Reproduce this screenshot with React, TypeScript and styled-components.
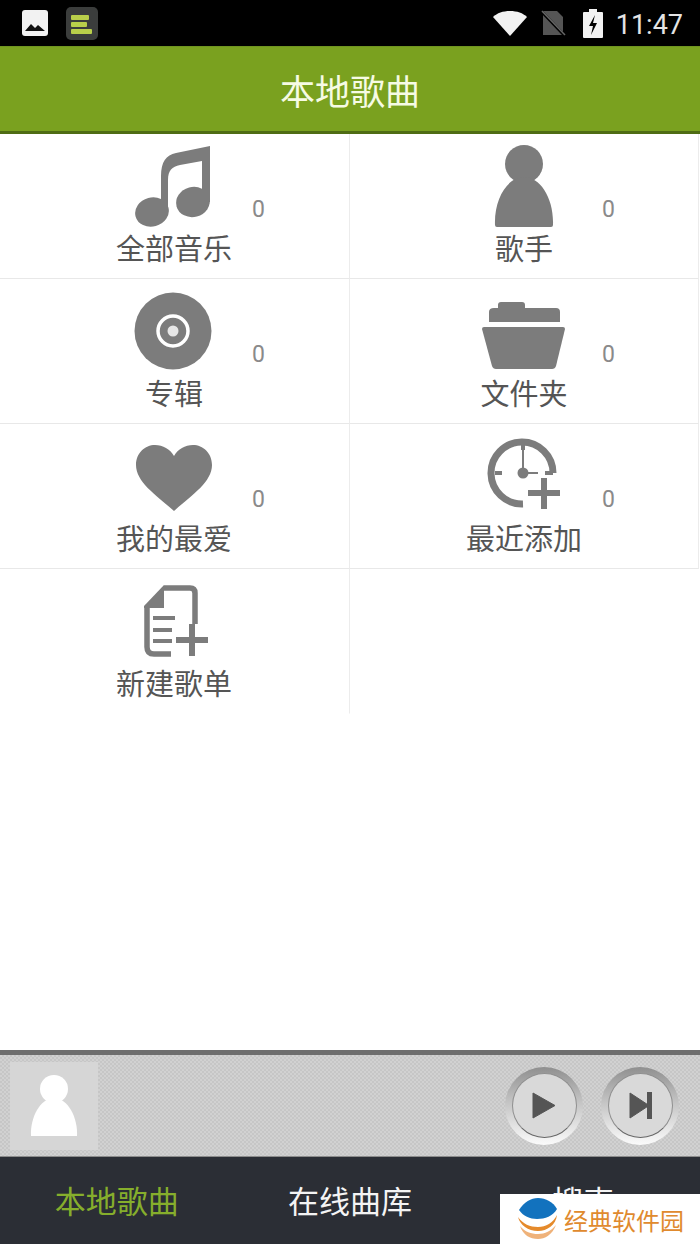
import React from 'react';
import styled, { createGlobalStyle } from 'styled-components';

const cjk = `"Noto Sans CJK SC", "Noto Sans", sans-serif`;

const GlobalStyle = createGlobalStyle`
  html, body {
    margin: 0;
    padding: 0;
    background: #fff;
  }
`;

const Screen = styled.div`
  position: relative;
  width: 700px;
  height: 1244px;
  display: flex;
  flex-direction: column;
  overflow: hidden;
  font-family: ${cjk};
`;

const StatusBar = styled.div`
  height: 46px;
  flex: none;
  background: #000;
  display: flex;
  align-items: center;
  padding: 0 17px 0 22px;
`;

const StatusLeft = styled.div`
  display: flex;
  align-items: center;
  gap: 18px;
  flex: 1;
`;

const StatusRight = styled.div`
  display: flex;
  align-items: center;
`;

const Clock = styled.span`
  font-family: Roboto, sans-serif;
  font-size: 27px;
  line-height: 30px;
  padding-top: 3px;
  color: #e4e4e4;
  margin-left: 13px;
`;

const Header = styled.div`
  height: 88px;
  flex: none;
  box-sizing: border-box;
  background: #7aa11f;
  border-top: 1px solid #6f9420;
  border-bottom: 3px solid #4f6c14;
  display: flex;
  align-items: center;
  justify-content: center;
  color: #f6fbe4;
  font-size: 35px;
  font-weight: 400;
`;

const Grid = styled.div`
  flex: 1;
  display: grid;
  grid-template-columns: 350px 350px;
  grid-auto-rows: 145px;
  align-content: start;
`;

const Cell = styled.div<{ $right?: boolean; $last?: boolean }>`
  box-sizing: border-box;
  display: grid;
  grid-template-columns: 116px 116px 1fr;
  align-items: start;
  border-right: 1px solid #ececec;
  margin-right: ${({ $right }) => ($right ? '1px' : '0')};
  border-bottom: 1px solid ${({ $last }) => ($last ? 'transparent' : '#e8e8e8')};
`;

const Tile = styled.div`
  grid-column: 2;
  display: flex;
  flex-direction: column;
  align-items: center;
  padding-top: 6px;
`;

const IconBox = styled.svg`
  display: block;
  width: 96px;
  height: 88px;
  flex: none;
  fill: #7c7c7c;
`;

const Label = styled.div`
  margin-top: 1px;
  font-size: 29px;
  line-height: 36px;
  font-weight: 400;
  color: #555;
  white-space: nowrap;
`;

const Count = styled.div`
  grid-column: 3;
  padding: 61px 0 0 20px;
  font-family: Roboto, sans-serif;
  font-size: 23px;
  line-height: 30px;
  color: #8a8a8a;
`;

const Player = styled.div`
  height: 107px;
  flex: none;
  box-sizing: border-box;
  border-top: 5px solid #6e6e6e;
  border-bottom: 1px solid #8c8c8c;
  background-color: #cbcbcb;
  background-image: repeating-conic-gradient(#c6c6c6 0 25%, #d1d1d1 0 50%);
  background-size: 4px 4px;
  display: flex;
  align-items: center;
  padding: 0 21px 0 10px;
`;

const Thumb = styled.div`
  width: 88px;
  height: 88px;
  background: #d6d6d6;
  margin-right: auto;
`;

const RoundButton = styled.div`
  width: 78px;
  height: 78px;
  margin-left: 18px;
  border-radius: 50%;
  background: linear-gradient(#8f8f8f, #c4c4c4 45%, #fbfbfb);
  display: flex;
  align-items: center;
  justify-content: center;
`;

const RoundFace = styled.div`
  width: 65px;
  height: 65px;
  box-sizing: border-box;
  border-radius: 50%;
  background: #d9d9d9;
  border: 1.5px solid #8f8f8f;
  border-bottom-color: #666;
  display: flex;
  align-items: center;
  justify-content: center;
`;

const TabBar = styled.div`
  height: 87px;
  flex: none;
  background: #2b2e35;
  display: grid;
  grid-template-columns: repeat(3, 1fr);
  align-items: center;
  justify-items: center;
  padding: 0 0 2px;
  box-sizing: border-box;
`;

const Tab = styled.div<{ $active?: boolean }>`
  font-size: 31px;
  font-weight: 400;
  color: ${({ $active }) => ($active ? '#86ae2c' : '#f4f4f4')};
`;

const Watermark = styled.div`
  position: absolute;
  right: 0;
  bottom: 0;
  width: 200px;
  height: 50px;
  background: #fff;
  display: flex;
  align-items: center;
  padding-left: 18px;
  box-sizing: border-box;
  gap: 6px;
  color: #e08a2e;
  font-size: 24px;
  letter-spacing: 0;
`;

const ImageIcon = () => (
  <svg width="26" height="26" viewBox="0 0 26 26">
    <rect x="0" y="0" width="26" height="26" rx="3" fill="#f2f2f2" />
    <path d="M3 21l6-7 4 4 3-3 7 6z" fill="#111" />
  </svg>
);

const AppIcon = () => (
  <svg width="32" height="33" viewBox="0 0 32 33">
    <rect width="32" height="33" rx="5" fill="#3b3d3c" />
    <g fill="#b9cf4a">
      <rect x="5" y="8" width="18" height="5" rx="1" />
      <rect x="5" y="15" width="16" height="5" rx="1" />
      <rect x="5" y="22" width="21" height="5" rx="1" />
    </g>
  </svg>
);

const WifiIcon = () => (
  <svg width="34" height="25" viewBox="0 0 34 25">
    <path d="M17 25L0 6C4 2 10 0 17 0s13 2 17 6z" fill="#f2f2f2" />
  </svg>
);

const SimIcon = () => (
  <svg width="26" height="26" viewBox="0 0 26 26" style={{ marginLeft: 13 }}>
    <path d="M3 1h14l6 6v18H3z" fill="#555" />
    <path d="M1 1l23 24" stroke="#000" strokeWidth="3" />
    <path d="M2 1l23 24" stroke="#666" strokeWidth="1.5" />
  </svg>
);

const BatteryIcon = () => (
  <svg width="20" height="29" viewBox="0 0 20 29" style={{ marginLeft: 17 }}>
    <path d="M6 0h8v3h5a1 1 0 0 1 1 1v24a1 1 0 0 1-1 1H1a1 1 0 0 1-1-1V4a1 1 0 0 1 1-1h5z" fill="#f2f2f2" />
    <path d="M12 6l-6 11h4l-2 9 6-12h-4z" fill="#000" />
  </svg>
);

const MusicIcon = () => (
  <IconBox viewBox="0 0 96 88">
    <ellipse cx="26" cy="72" rx="17" ry="14.5" transform="rotate(-15 26 72)" />
    <ellipse cx="67" cy="62" rx="17" ry="15" transform="rotate(-15 67 62)" />
    <path d="M35 71V36C35 22 40 15 50 13L84 6V62H76V21L54 25C46 27 42 30 42 40V71Z" />
  </IconBox>
);

const PersonIcon = () => (
  <IconBox viewBox="0 0 96 88">
    <circle cx="48" cy="24" r="19" />
    <path d="M19 85C18 58 32 37 48 37C64 37 78 58 77 85Q77 87 75 87H21Q19 87 19 85Z" />
  </IconBox>
);

const DiscIcon = () => (
  <IconBox viewBox="0 0 96 88">
    <circle cx="47" cy="46" r="38.5" />
    <circle cx="47" cy="46" r="15" fill="none" stroke="#fff" strokeWidth="3.5" />
    <circle cx="47" cy="46" r="5.5" fill="#e6e6e6" />
  </IconBox>
);

const FolderIcon = () => (
  <IconBox viewBox="0 0 96 88">
    <path d="M13 37V27Q13 23 18 23H22V20Q22 17 25 17H46Q49 17 49 20V23H80Q84 23 84 27V37Z" />
    <path d="M6 44Q6 42 8 42H87Q89 42 89 44L80 81Q79 84 76 84H20Q17 84 16 81Z" />
  </IconBox>
);

const HeartIcon = () => (
  <IconBox viewBox="0 0 96 88">
    <path d="M48 81C30 65 10 52 10 35C10 23 19 15 29 15C37 15 44 19 48 26C52 19 59 15 67 15C77 15 86 23 86 35C86 52 66 65 48 81Z" />
  </IconBox>
);

const RecentIcon = () => (
  <IconBox viewBox="0 0 96 88">
    <g fill="none" stroke="#7c7c7c">
      <path d="M77 43A31 31 0 1 0 47 74" strokeWidth="7" />
      <path d="M47 13V43H62" strokeWidth="2" />
      <path d="M19 43H26M69 43H77M47 13V20" strokeWidth="4" />
      <path d="M52 63H84M68 48V79" strokeWidth="6" />
    </g>
    <circle cx="47" cy="43" r="5.5" />
  </IconBox>
);

const NewListIcon = () => (
  <IconBox viewBox="0 0 96 88">
    <g fill="none" stroke="#7c7c7c" strokeWidth="5.5">
      <path d="M69 49V18Q69 13 64 13H38" />
      <path d="M21 31V72Q21 79 28 79H45" />
      <path d="M27 43H49M27 55H46M27 66H46" strokeWidth="4" />
      <path d="M50 65H82M66 49V81" strokeWidth="6" />
    </g>
    <path d="M18 31L38 10V33H18Z" />
  </IconBox>
);

const ThumbPerson = () => (
  <svg width="88" height="88" viewBox="0 0 88 88">
    <circle cx="44" cy="27" r="14" fill="#fff" />
    <path d="M21 74C20 56 30 36 44 36C58 36 68 56 67 74Z" fill="#fff" />
  </svg>
);

const PlayGlyph = () => (
  <svg width="24" height="27" viewBox="0 0 24 27">
    <path d="M1 1L23 13.5L1 26Z" fill="#555" stroke="#555" strokeLinejoin="round" />
  </svg>
);

const NextGlyph = () => (
  <svg width="24" height="27" viewBox="0 0 24 27" style={{ marginLeft: 2 }}>
    <path d="M1 1L20 13.5L1 26Z" fill="#555" stroke="#555" strokeLinejoin="round" />
    <rect x="18" y="0" width="5" height="27" fill="#555" />
  </svg>
);

const WatermarkLogo = () => (
  <svg width="40" height="42" viewBox="0 0 40 42">
    <path d="M1 12C6 4 13 0 20 0C28 0 35 4 39 11C35 18 27 21 19 21C12 21 5 18 1 12Z" fill="#1272be" />
    <path d="M0 19C5 26 12 29 20 29C28 29 35 25 39 17C38 27 29 33 20 33C10 33 2 27 0 19Z" fill="#e58a2b" />
    <path d="M2 28C7 34 13 36 20 36C27 36 33 33 38 27C34 37 27 41 20 41C12 41 5 37 2 28Z" fill="#efb27a" />
  </svg>
);

const items = [
  { label: '全部音乐', icon: <MusicIcon />, count: 0 },
  { label: '歌手', icon: <PersonIcon />, count: 0 },
  { label: '专辑', icon: <DiscIcon />, count: 0 },
  { label: '文件夹', icon: <FolderIcon />, count: 0 },
  { label: '我的最爱', icon: <HeartIcon />, count: 0 },
  { label: '最近添加', icon: <RecentIcon />, count: 0 },
  { label: '新建歌单', icon: <NewListIcon /> },
];

const App: React.FC = () => (
  <Screen>
    <GlobalStyle />
    <StatusBar>
      <StatusLeft>
        <ImageIcon />
        <AppIcon />
      </StatusLeft>
      <StatusRight>
        <WifiIcon />
        <SimIcon />
        <BatteryIcon />
        <Clock>11:47</Clock>
      </StatusRight>
    </StatusBar>

    <Header>本地歌曲</Header>

    <Grid>
      {items.map((item, i) => (
        <Cell key={item.label} $right={i % 2 === 1} $last={i === items.length - 1}>
          <Tile>
            {item.icon}
            <Label>{item.label}</Label>
          </Tile>
          {item.count !== undefined && <Count>{item.count}</Count>}
        </Cell>
      ))}
    </Grid>

    <Player>
      <Thumb>
        <ThumbPerson />
      </Thumb>
      <RoundButton>
        <RoundFace>
          <PlayGlyph />
        </RoundFace>
      </RoundButton>
      <RoundButton>
        <RoundFace>
          <NextGlyph />
        </RoundFace>
      </RoundButton>
    </Player>

    <TabBar>
      <Tab $active>本地歌曲</Tab>
      <Tab>在线曲库</Tab>
      <Tab>搜索</Tab>
    </TabBar>

    <Watermark>
      <WatermarkLogo />
      经典软件园
    </Watermark>
  </Screen>
);

export default App;
